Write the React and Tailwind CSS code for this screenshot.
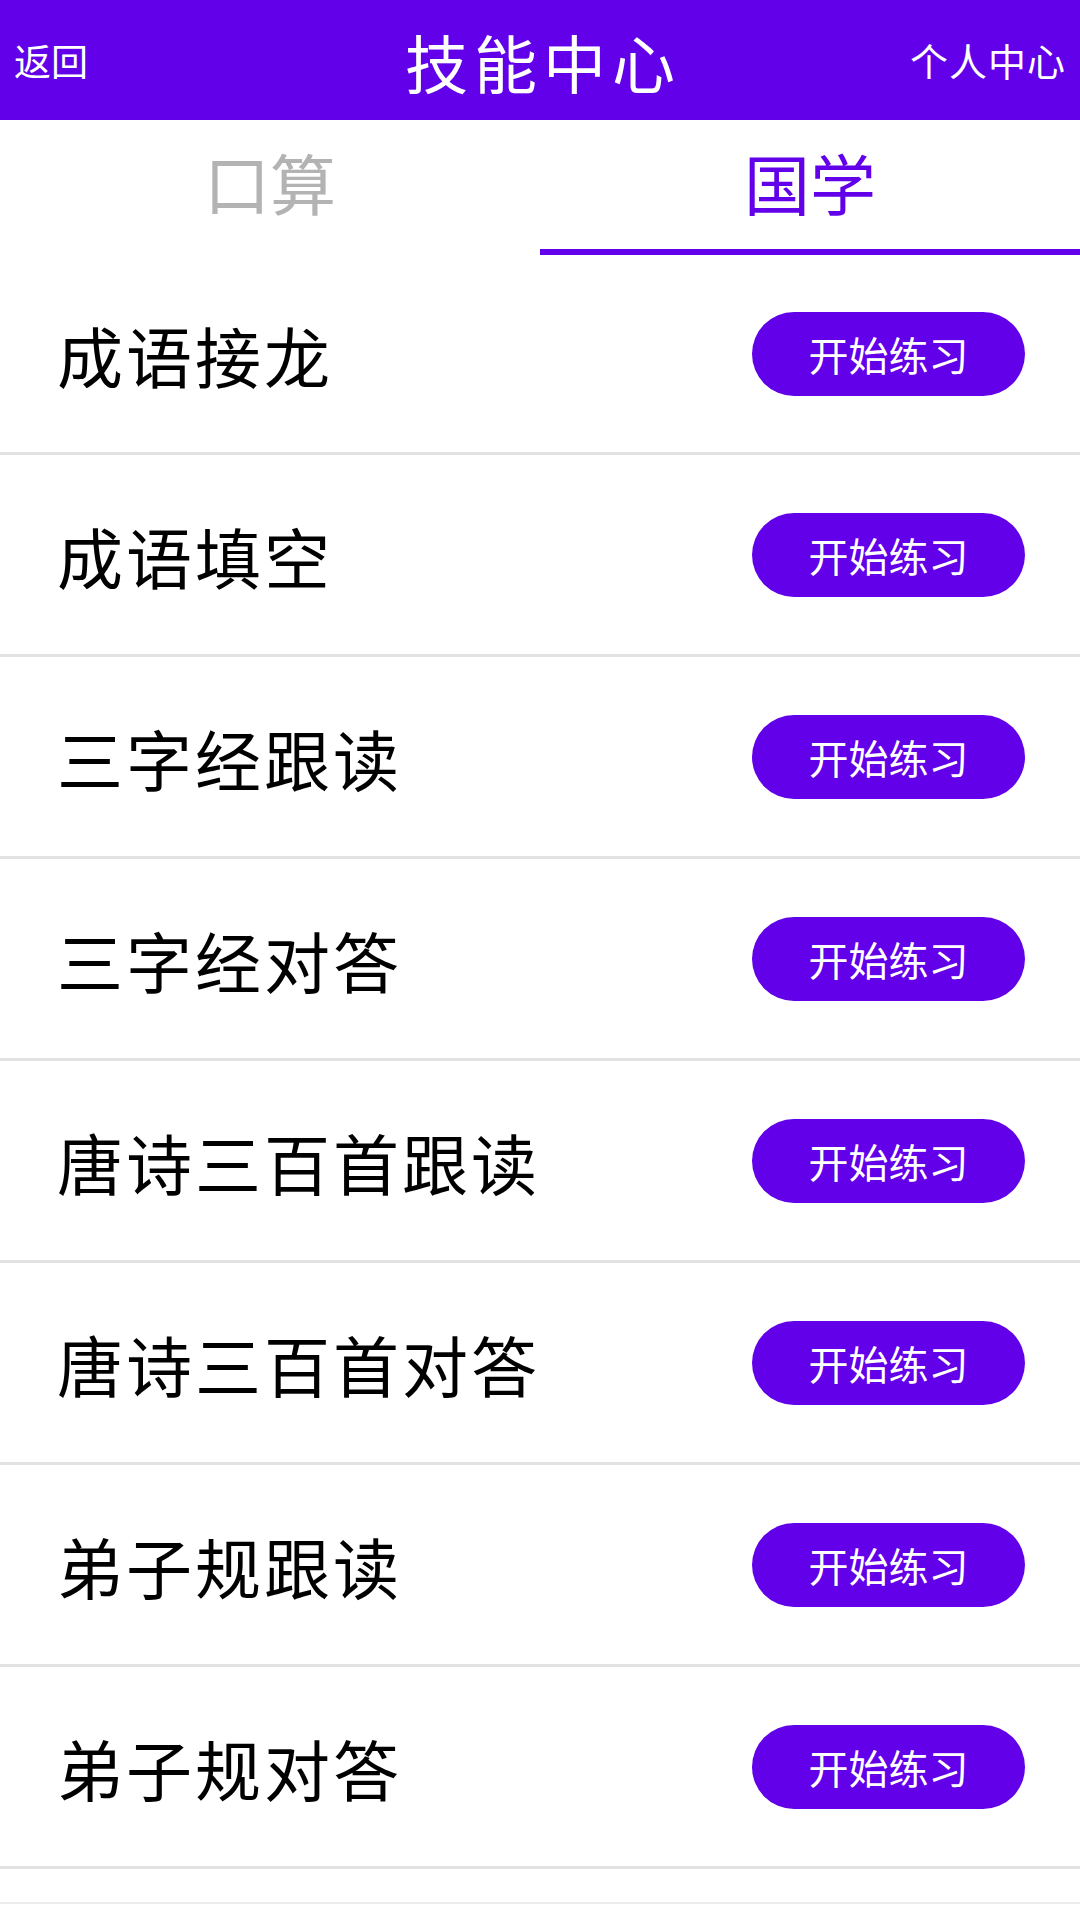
import { useState } from 'react';

const items = {
  kousuan: ['口算加法', '口算减法'],
  guoxue: ['成语接龙', '成语填空', '三字经跟读', '三字经对答', '唐诗三百首跟读', '唐诗三百首对答', '弟子规跟读', '弟子规对答'],
};

export default function App() {
  const [tab, setTab] = useState('guoxue');

  return (
    <div className="w-[1080px] min-h-[1920px] bg-white" style={{ fontFamily: '"Noto Sans CJK SC", "Noto Sans", sans-serif' }}>
      <header className="h-[120px] bg-[#6200ea] flex items-center justify-between px-[14px] relative">
        <button className="text-white text-[37px] leading-none">返回</button>
        <h1 className="absolute left-1/2 -translate-x-1/2 text-white text-[63px] leading-none tracking-[6px] pl-[6px]">技能中心</h1>
        <button className="text-white text-[38px] leading-none tracking-[1px]">个人中心</button>
      </header>

      <div className="flex h-[135px]">
        {[['kousuan', '口算'], ['guoxue', '国学']].map(([key, label]) => (
          <button key={key} onClick={() => setTab(key)}
            className={`flex-1 flex items-center justify-center border-b-[6px] pb-[8px] text-[66px] leading-none ${tab === key ? 'text-[#6200ea] border-[#6200ea]' : 'text-[#b3b3b3] border-transparent'}`}>
            {label}
          </button>
        ))}
      </div>

      <ul>
        {items[tab].map((name) => (
          <li key={name} className="h-[202px] flex items-center justify-between pl-[57px] pr-[55px] border-b-[3px] border-[#e2e2e2] first:h-[200px]">
            <span className="text-black text-[66px] leading-none tracking-[3px]">{name}</span>
            <button className="w-[273px] h-[84px] rounded-full bg-[#6200ea] text-white text-[40px] leading-none">开始练习</button>
          </li>
        ))}
      </ul>
      <div className="h-[35px] border-b-2 border-[#ececec]" />
    </div>
  );
}
